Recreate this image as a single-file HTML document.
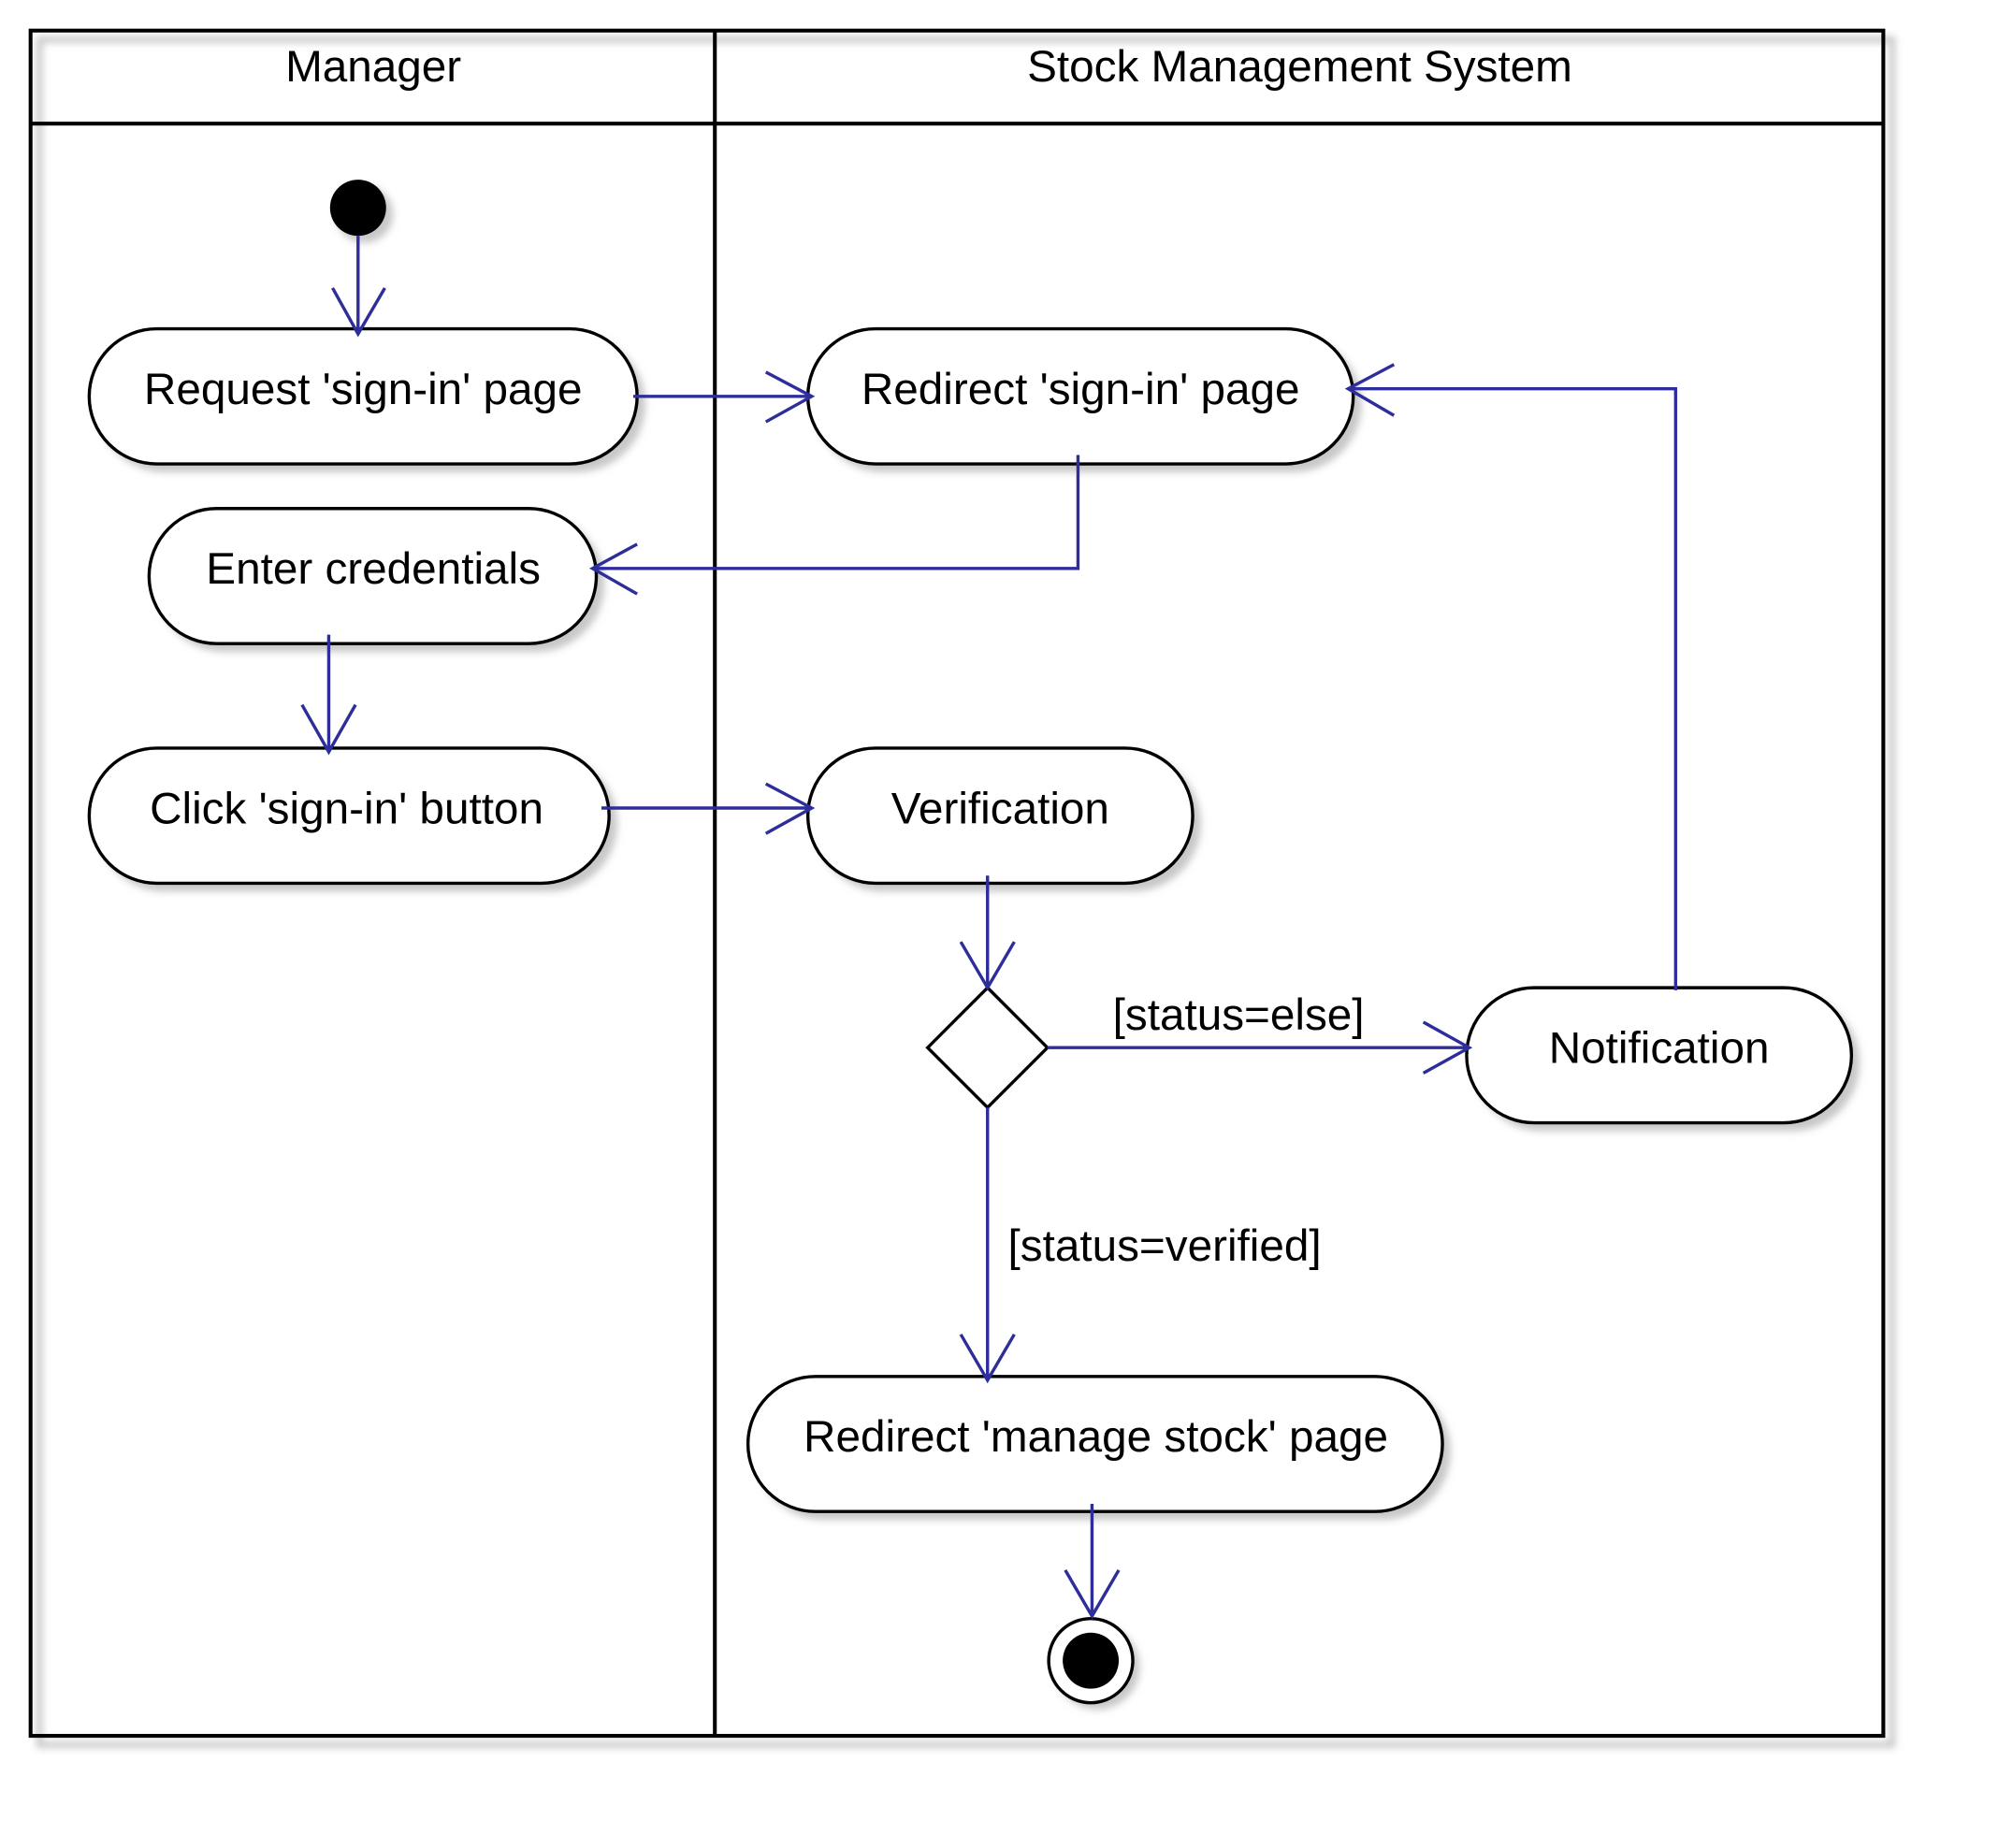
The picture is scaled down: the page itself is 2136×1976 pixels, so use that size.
<!DOCTYPE html>
<html><head><meta charset="utf-8"><style>
html,body{margin:0;padding:0;background:#fff;}
svg{display:block;}
text{font-family:"Liberation Sans",Arial,sans-serif;font-size:35px;fill:#000;text-anchor:middle;}
</style></head><body>
<svg width="2136" height="1976" viewBox="0 0 1568 1450" preserveAspectRatio="none" xmlns="http://www.w3.org/2000/svg">
<defs>
<filter id="b" x="-10%" y="-10%" width="130%" height="130%"><feGaussianBlur stdDeviation="3"/></filter>
</defs>
<g fill="#c8c8c8" stroke="#c8c8c8" filter="url(#b)">
<rect x="31" y="31" width="1454" height="1338" fill="none" stroke-width="5"/>
<rect x="76" y="264" width="430" height="106" rx="53"/>
<rect x="640" y="264" width="428" height="106" rx="53"/>
<rect x="123" y="405" width="351" height="106" rx="53"/>
<rect x="76" y="593" width="408" height="106" rx="53"/>
<rect x="640" y="593" width="302" height="106" rx="53"/>
<rect x="1157" y="781" width="302" height="106" rx="53"/>
<rect x="593" y="1086" width="545" height="106" rx="53"/>
<circle cx="286" cy="168" r="22"/>
<circle cx="861" cy="1308" r="33"/>
</g>
<g fill="none" stroke="#000" stroke-width="3">
<rect x="24" y="24" width="1454" height="1338"/>
<line x1="24" y1="97" x2="1478" y2="97"/>
<line x1="561" y1="24" x2="561" y2="1362"/>
</g>
<text x="293" y="64">Manager</text>
<text x="1020" y="64">Stock Management System</text>
<g fill="#fff" stroke="#000" stroke-width="2.5">
<rect x="70" y="258" width="430" height="106" rx="53"/>
<rect x="634" y="258" width="428" height="106" rx="53"/>
<rect x="117" y="399" width="351" height="106" rx="53"/>
<rect x="70" y="587" width="408" height="106" rx="53"/>
<rect x="634" y="587" width="302" height="106" rx="53"/>
<rect x="1151" y="775" width="302" height="106" rx="53"/>
<rect x="587" y="1080" width="545" height="106" rx="53"/>
<polygon points="775,775 822,822 775,869 728,822"/>
<circle cx="856" cy="1303" r="33"/>
</g>
<circle cx="281" cy="163" r="22" fill="#000"/>
<circle cx="856" cy="1303" r="22" fill="#000"/>
<text x="285" y="317">Request 'sign-in' page</text>
<text x="848" y="317">Redirect 'sign-in' page</text>
<text x="293" y="458">Enter credentials</text>
<text x="272" y="646">Click 'sign-in' button</text>
<text x="785" y="646">Verification</text>
<text x="1302" y="834">Notification</text>
<text x="860" y="1139">Redirect 'manage stock' page</text>
<text x="972" y="808">[status=else]</text>
<text x="914" y="989">[status=verified]</text>
<g fill="none" stroke="#2e2e9a" stroke-width="2.5">
<path d="M281 185V262M261 226L281 262L302 226"/>
<path d="M497 311H637M601 292L637 311L601 331"/>
<path d="M846 357V446H465M500 427L465 446L500 466"/>
<path d="M258 498V590M237 553L258 590L279 553"/>
<path d="M472 634H637M601 615L637 634L601 654"/>
<path d="M775 687V775M754 739L775 775L796 739"/>
<path d="M822 822H1153M1117 802L1153 822L1117 842"/>
<path d="M1315 777V305H1058M1094 286L1058 305L1094 326"/>
<path d="M775 869V1083M754 1047L775 1083L796 1047"/>
<path d="M857 1180V1268M836 1232L857 1268L878 1232"/>
</g>
</svg>
</body></html>
